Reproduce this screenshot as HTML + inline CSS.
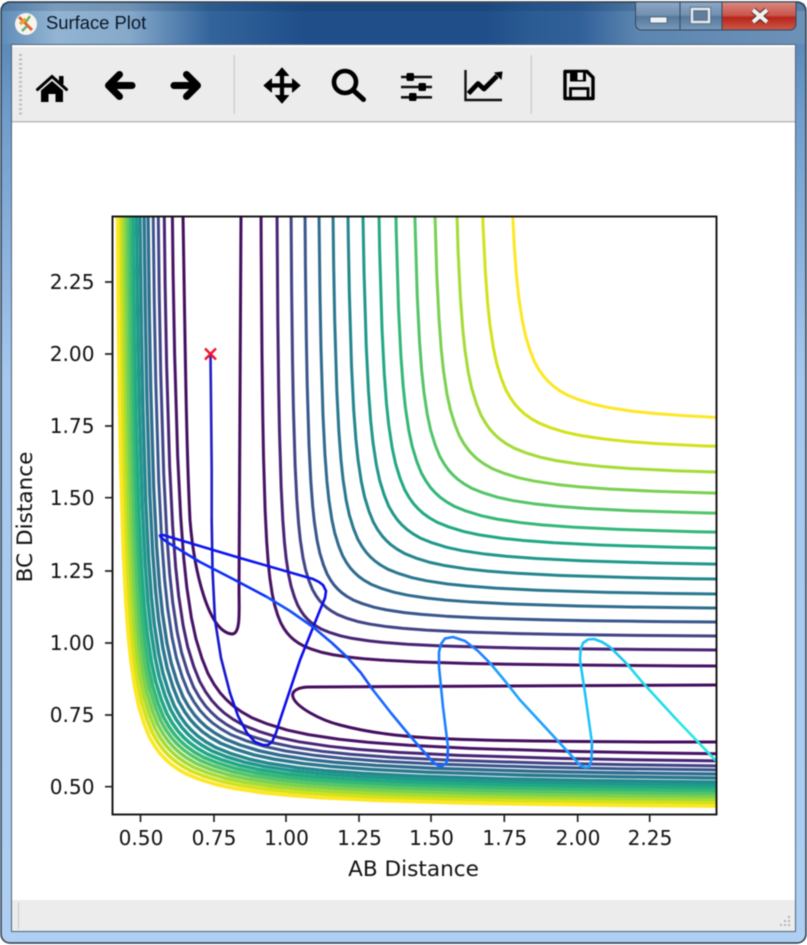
<!DOCTYPE html>
<html><head><meta charset="utf-8"><title>Surface Plot</title>
<style>
html,body{margin:0;padding:0;background:#fff;width:807px;height:945px;overflow:hidden}
svg{display:block;filter:blur(.55px)}
.t{font-family:"DejaVu Sans",sans-serif;font-size:20.1px;fill:#111}
.l{font-family:"DejaVu Sans",sans-serif;font-size:21.6px;fill:#111}
</style></head><body>
<svg width="807" height="945" viewBox="0 0 807 945" xmlns="http://www.w3.org/2000/svg">
<defs>
<linearGradient id="tb" x1="0" y1="0" x2="807" y2="0" gradientUnits="userSpaceOnUse">
<stop offset="0" stop-color="#5f8cb8"/><stop offset=".07" stop-color="#93b5d3"/><stop offset=".16" stop-color="#86a9ca"/><stop offset=".26" stop-color="#33659c"/><stop offset=".38" stop-color="#1f4e88"/><stop offset=".6" stop-color="#1f4e88"/><stop offset=".66" stop-color="#2c5c94"/><stop offset=".72" stop-color="#32619a"/><stop offset=".79" stop-color="#5c86b0"/><stop offset="1" stop-color="#6d92b8"/>
</linearGradient>
<linearGradient id="fr" x1="0" y1="0" x2="0" y2="945" gradientUnits="userSpaceOnUse">
<stop offset="0" stop-color="#4f7fae"/><stop offset=".12" stop-color="#6f9ccb"/><stop offset=".4" stop-color="#a6c8ee"/><stop offset="1" stop-color="#aecff2"/>
</linearGradient>
<linearGradient id="bg" x1="0" y1="0" x2="0" y2="1">
<stop offset="0" stop-color="#8ea8c4"/><stop offset=".48" stop-color="#6f8fb0"/><stop offset=".52" stop-color="#55779a"/><stop offset="1" stop-color="#7a9abb"/>
</linearGradient>
<linearGradient id="cg" x1="0" y1="0" x2="0" y2="1">
<stop offset="0" stop-color="#d98a82"/><stop offset=".48" stop-color="#c9554a"/><stop offset=".55" stop-color="#b8241a"/><stop offset="1" stop-color="#cc5a48"/>
</linearGradient>
<clipPath id="ax"><rect x="113" y="217" width="603" height="597"/></clipPath>
<path id="h" fill="none" vector-effect="non-scaling-stroke" stroke-linejoin="round" d="M1,-1600L1.5,-1067 2,-800 3,-533 4,-400 5,-320 6,-267 8,-200 10,-160 12,-133 14,-114 17,-94 20,-80 24,-67 28,-57 32,-50 36,-44.4 40,-40 44.4,-36 50,-32 57,-28 67,-24 80,-20 94,-17 114,-14 133,-12 160,-10 200,-8 267,-6 320,-5 400,-4 533,-3 800,-2 1067,-1.5 1600,-1"/>
</defs>

<!-- window frame -->
<rect x="1" y="2" width="805" height="941" rx="9" fill="url(#fr)" stroke="#2a3a4a" stroke-width="1.5"/>
<path d="M2 44V11a8 8 0 0 1 8-8H797a8 8 0 0 1 8 8V44Z" fill="url(#tb)"/>
<rect x="2" y="3" width="803" height="8" fill="#0a2a50" opacity=".18"/>
<rect x="11.5" y="44.5" width="784" height="887" fill="#fff" stroke="#4d6278" stroke-width="1"/>
<rect x="12" y="45" width="783" height="2" fill="#fff"/>
<rect x="12" y="47" width="783" height="74" fill="#ececec"/>
<rect x="12" y="121" width="783" height="1.5" fill="#bcbcbc"/>
<rect x="12" y="900" width="783" height="31" fill="#ececec"/>
<rect x="18" y="902" width="1" height="27" fill="#c8c8c8"/>
<g fill="#b4b4b4">
<rect x="788" y="916" width="2" height="2"/><rect x="788" y="920" width="2" height="2"/><rect x="788" y="924" width="2" height="2"/><rect x="784" y="920" width="2" height="2"/><rect x="784" y="924" width="2" height="2"/><rect x="780" y="924" width="2" height="2"/>
</g>

<!-- title -->
<circle cx="26" cy="24" r="11" fill="#f6f4ef"/>
<path d="M19 17L32 30" stroke="#e0602c" stroke-width="2.8"/>
<path d="M20 24L26 19" stroke="#e8a030" stroke-width="3.4"/>
<path d="M30 16L26 22" stroke="#6cb060" stroke-width="2.4"/>
<path d="M22 31L27 26" stroke="#62b070" stroke-width="2.4"/>
<text x="46" y="29" font-family="'Liberation Sans',sans-serif" font-size="18.4" fill="#0a1628">Surface Plot</text>

<!-- caption buttons -->
<path d="M635.5 2V24a6 6 0 0 0 6 6H680V2Z" fill="url(#bg)" stroke="#33465c"/>
<rect x="680" y="2" width="42" height="28" fill="url(#bg)" stroke="#33465c"/>
<path d="M722 2V30H790a6 6 0 0 0 6-6V2Z" fill="url(#cg)" stroke="#33465c"/>
<rect x="650" y="17" width="17" height="6" rx="1" fill="#eef2f6" stroke="#49586a" stroke-width=".8"/>
<rect x="692" y="9" width="17" height="13" fill="#5f7e9e" stroke="#3d4d60" stroke-width="4"/>
<rect x="692" y="9" width="17" height="13" fill="none" stroke="#dfe5eb" stroke-width="2.8"/>
<path d="M753 10L767 22M767 10L753 22" stroke="#4a1d1a" stroke-width="6"/>
<path d="M753 10L767 22M767 10L753 22" stroke="#f0f0f0" stroke-width="4.2"/>

<!-- toolbar -->
<g fill="#bdbdbd">
<rect x="19" y="54" width="3" height="2"/><rect x="19" y="58.500" width="3" height="2"/><rect x="19" y="63" width="3" height="2"/><rect x="19" y="67.500" width="3" height="2"/><rect x="19" y="72" width="3" height="2"/><rect x="19" y="76.500" width="3" height="2"/><rect x="19" y="81" width="3" height="2"/><rect x="19" y="85.500" width="3" height="2"/><rect x="19" y="90" width="3" height="2"/><rect x="19" y="94.500" width="3" height="2"/><rect x="19" y="99" width="3" height="2"/><rect x="19" y="103.500" width="3" height="2"/><rect x="19" y="108" width="3" height="2"/><rect x="19" y="112.500" width="3" height="2"/>
</g>
<rect x="233.500" y="55" width="1.500" height="59" fill="#cfcfcf"/>
<rect x="530.500" y="55" width="1.500" height="59" fill="#cfcfcf"/>

<!-- home -->
<path d="M37.500 89.500L52 76.500L66.500 89.500" fill="none" stroke="#000" stroke-width="3" stroke-linecap="round"/>
<rect x="59" y="76" width="4.500" height="8"/>
<path d="M41 90.500L52 81L63 90.500V102H55.500V94H48.500V102H41Z"/>
<!-- arrows -->
<path d="M132 85.500H110M119.500 74.500L108.500 85.500L119.500 96.500" fill="none" stroke="#000" stroke-width="7" stroke-linecap="round" stroke-linejoin="round"/>
<path d="M174 85.500H196M186.500 74.500L197.500 85.500L186.500 96.500" fill="none" stroke="#000" stroke-width="7" stroke-linecap="round" stroke-linejoin="round"/>
<!-- move -->
<path d="M282 72V99M269 85.500H295" stroke="#000" stroke-width="4.200"/>
<path d="M282 68L288.500 75.500H275.500ZM282 103L288.500 95.500H275.500ZM264 85.500L271.500 79V92ZM300 85.500L292.500 79V92Z" stroke="#000" stroke-width="1" stroke-linejoin="round"/>
<!-- zoom -->
<circle cx="345" cy="82" r="11" fill="none" stroke="#000" stroke-width="4.600"/>
<path d="M353.500 90.500L363.500 99.500" stroke="#000" stroke-width="5" stroke-linecap="round"/>
<!-- sliders -->
<path d="M401 77H432M401 87H432M401 97.300H432" stroke="#111" stroke-width="2.600"/>
<rect x="406.500" y="73" width="7.500" height="8" rx="1.500"/><rect x="418.500" y="83" width="7.500" height="8" rx="1.500"/><rect x="409" y="93" width="7.500" height="8" rx="1.500"/>
<!-- chart -->
<path d="M465.500 70V100H502" fill="none" stroke="#111" stroke-width="2.400"/>
<path d="M468.500 93.500L478 83.500L484 89L497 76" fill="none" stroke="#000" stroke-width="4.800" stroke-linejoin="round"/>
<path d="M494 72.500L502.500 71.500L501.500 80Z"/>
<!-- save -->
<path d="M565 71.500H587L593 77.500V98.500H565Z" fill="none" stroke="#000" stroke-width="3.400" stroke-linejoin="round"/>
<rect x="570" y="71" width="16" height="10.500"/>
<rect x="577.500" y="72.500" width="5.500" height="7.500" fill="#ececec"/>
<path d="M570.500 99V88.500H588V99" fill="none" stroke="#000" stroke-width="2.800"/>

<!-- contours -->
<g clip-path="url(#ax)" stroke-width="3">
<path d="M183,216C185,330 186,440 190,520C194,570 208,632 232,634C241,634 239,610 239,590L240,400L241,216" fill="none" stroke="#440e5f"/>
<path d="M717,685L410,686.500L310,687C298,687 291,691 293,697C296,707 320,720 340,725C370,733 400,736 430,738C480,741 600,742 717,742" fill="none" stroke="#440e5f"/>

<use href="#h" stroke="#471365" transform="translate(258.800 668.200) scale(.79)"/>
<use href="#h" stroke="#471365" transform="translate(165.500 760.500) scale(1.521)"/>
<use href="#h" stroke="#482475" transform="translate(274.500 652.500) scale(.829)"/>
<use href="#h" stroke="#482475" transform="translate(157.600 767.400) scale(1.506)"/>
<use href="#h" stroke="#414487" transform="translate(288.200 638.800) scale(.866)"/>
<use href="#h" stroke="#414487" transform="translate(151.800 772.200) scale(1.492)"/>
<use href="#h" stroke="#39568c" transform="translate(301.800 625.200) scale(.901)"/>
<use href="#h" stroke="#39568c" transform="translate(146.900 776.100) scale(1.477)"/>
<use href="#h" stroke="#2f6c8e" transform="translate(315.100 611.900) scale(.984)"/>
<use href="#h" stroke="#2f6c8e" stroke-width="3.300" transform="translate(142 780) scale(1.462)"/>
<use href="#h" stroke="#2a788e" transform="translate(328.400 598.600) scale(1.046)"/>
<use href="#h" stroke="#2a788e" stroke-width="3.400" transform="translate(138.200 783.800) scale(1.447)"/>
<use href="#h" stroke="#24878e" transform="translate(342.800 584.200) scale(1.09)"/>
<use href="#h" stroke="#24878e" stroke-width="3.400" transform="translate(134.300 787.700) scale(1.432)"/>
<use href="#h" stroke="#1f988b" transform="translate(357.300 569.700) scale(1.118)"/>
<use href="#h" stroke="#1f988b" stroke-width="3.500" transform="translate(131 790.500) scale(1.416)"/>
<use href="#h" stroke="#22a884" transform="translate(372.900 554.100) scale(1.132)"/>
<use href="#h" stroke="#22a884" stroke-width="3.600" transform="translate(127.600 793.400) scale(1.401)"/>
<use href="#h" stroke="#35b779" transform="translate(389.400 538.600) scale(1.146)"/>
<use href="#h" stroke="#35b779" stroke-width="3.600" transform="translate(124.800 796.200) scale(1.385)"/>
<use href="#h" stroke="#54c568" transform="translate(408.300 519.700) scale(1.118)"/>
<use href="#h" stroke="#54c568" stroke-width="3.600" transform="translate(122.500 799) scale(1.369)"/>
<use href="#h" stroke="#7ad151" transform="translate(427.700 500.300) scale(1.132)"/>
<use href="#h" stroke="#7ad151" stroke-width="3.600" transform="translate(120.100 801.900) scale(1.353)"/>
<use href="#h" stroke="#a5db36" transform="translate(449 480) scale(1.14)"/>
<use href="#h" stroke="#a5db36" stroke-width="3.600" transform="translate(117.700 804.800) scale(1.337)"/>
<use href="#h" stroke="#d2e21b" transform="translate(474 455) scale(1.14)"/>
<use href="#h" stroke="#d2e21b" stroke-width="3.600" transform="translate(115.300 807.700) scale(1.32)"/>
<use href="#h" stroke="#fde725" transform="translate(502.800 427.200) scale(1.14)"/>
<use href="#h" stroke="#fde725" stroke-width="3.600" transform="translate(112.900 810.600) scale(1.299)"/>

<!-- trajectory -->
<g fill="none" stroke-width="2.600" stroke-linejoin="round" stroke-linecap="round">
<polyline stroke="#2020c4" points="210.500,356 211,400 211.700,470 211.700,520"/>
<polyline stroke="#1818cc" points="211.700,520 212.500,570 215,620 221,658 230,693"/>
<polyline stroke="#1010dc" points="230,693 238,716 247,733 255,742 263,745 268,745 272,742 276,733 280,720"/>
<polyline stroke="#0c0cec" points="280,720 300,660 320,610 325,598 326,591 323,585 319,582 313,579"/>
<polyline stroke="#0c14f0" points="313,579 240,558 163,535 160,535.500 161,537.500 167,542"/>
<polyline stroke="#0c2cf6" points="167,542 200,562 233,579 267,597"/>
<polyline stroke="#1450fa" points="267,597 290,611 313,627 332,643 347,657 361,673 373,690"/>
<polyline stroke="#1868ff" points="373,690 391,713 410,736 433,762 438,765.500 442,766 446,764 447.500,758 448,747"/>
<polyline stroke="#1c80ff" points="448,747 443,707 439,667 439,652 441,644 445,638.500 453,637 465,641 478,651 490,663"/>
<polyline stroke="#1ca0ff" points="490,663 505,681 520,700 557,740 580,765 585,767.500 589,767 591.500,760 592,743"/>
<polyline stroke="#1cc4f8" points="592,743 585,693 580,660 580.500,650 583,643 588,639.500 594,639 602,642 610,647 627,664"/>
<polyline stroke="#20dcec" points="627,664 643,683 677,720"/>
<polyline stroke="#28e8e0" points="677,720 720,765"/>
</g>
<path d="M205 348.500L216 359.500M216 348.500L205 359.500" stroke="#f5102e" stroke-width="2.400"/>
</g>

<!-- axes box -->
<rect x="112.500" y="216.500" width="604" height="598" fill="none" stroke="#111" stroke-width="1.900"/>
<g stroke="#222" stroke-width="1.700">
<path d="M105 282H112M105 354H112M105 426H112M105 497.700H112M105 571H112M105 643H112M105 715H112M105 786.700H112"/>
<path d="M140.500 815V822M214 815V822M286 815V822M359 815V822M431 815V822M504.300 815V822M577.700 815V822M649.700 815V822"/>
</g>
<g class="t" text-anchor="end">
<text class="t" x="94.500" y="289">2.25</text>
<text class="t" x="94.500" y="361">2.00</text>
<text class="t" x="94.500" y="433">1.75</text>
<text class="t" x="94.500" y="505">1.50</text>
<text class="t" x="94.500" y="578">1.25</text>
<text class="t" x="94.500" y="650">1.00</text>
<text class="t" x="94.500" y="722">0.75</text>
<text class="t" x="94.500" y="794">0.50</text>
</g>
<g text-anchor="middle">
<text class="t" x="141" y="845">0.50</text>
<text class="t" x="214" y="845">0.75</text>
<text class="t" x="286.500" y="845">1.00</text>
<text class="t" x="359.500" y="845">1.25</text>
<text class="t" x="431.500" y="845">1.50</text>
<text class="t" x="504.800" y="845">1.75</text>
<text class="t" x="578" y="845">2.00</text>
<text class="t" x="650" y="845">2.25</text>
<text class="l" x="413.500" y="876">AB Distance</text>
<text class="l" transform="translate(32 517) rotate(-90)">BC Distance</text>
</g>
</svg>
</body></html>
